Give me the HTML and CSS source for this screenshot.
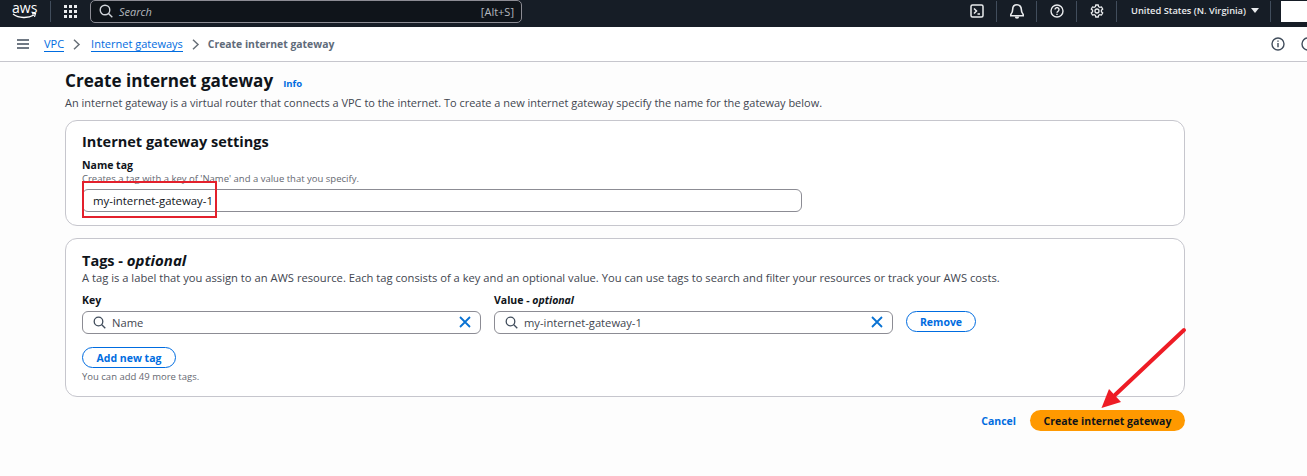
FILE: index.html
```html
<!DOCTYPE html>
<html lang="en">
<head>
    <meta charset="UTF-8">
    <title>Create internet gateway</title>
    <link rel="stylesheet" href="styles.css">
</head>
<body>
    <header class="topbar">
        <div class="logo">
            <span class="logo-text">aws</span>
            <svg class="logo-smile" width="25" height="6" viewBox="0 0 25 6"><path d="M1 1c6 4.500 15 4.500 21 1" fill="none" stroke="#fff" stroke-width="1.400"/><path d="M20 .8l3.500-.3-1 3.300" fill="none" stroke="#fff" stroke-width="1.200"/></svg>
        </div>
        <div class="grid-btn">
            <svg width="13" height="13" viewBox="0 0 13 13" fill="#e9ebed">
                <rect x="0" y="0" width="3" height="3"/><rect x="5" y="0" width="3" height="3"/><rect x="10" y="0" width="3" height="3"/>
                <rect x="0" y="5" width="3" height="3"/><rect x="5" y="5" width="3" height="3"/><rect x="10" y="5" width="3" height="3"/>
                <rect x="0" y="10" width="3" height="3"/><rect x="5" y="10" width="3" height="3"/><rect x="10" y="10" width="3" height="3"/>
            </svg>
        </div>
        <div class="search">
            <svg width="14" height="14" viewBox="0 0 14 14" fill="none" stroke="#d1d5db" stroke-width="1.400"><circle cx="6" cy="6" r="4.800"/><path d="M9.500 9.500l3.800 3.800"/></svg>
            <span class="search-text">Search</span>
            <span class="search-key">[Alt+S]</span>
        </div>
        <div class="top-icons">
            <div class="top-icon">
                <svg width="14" height="14" viewBox="0 0 14 14" fill="none" stroke="#e9ebed" stroke-width="1.500"><rect x="1" y="1" width="12" height="12" rx="1.500"/><path d="M4 4.500l2.500 2.500L4 9.500M7.500 10H10"/></svg>
            </div>
            <div class="top-icon">
                <svg width="14" height="15" viewBox="0 0 14 15" fill="#e9ebed"><path d="M7 .8c-2.700 0-4.300 2-4.300 4.500 0 2.500-.7 3.900-1.900 5.200v1.200h12.400v-1.200c-1.200-1.300-1.900-2.700-1.900-5.200C11.300 2.800 9.700.8 7 .8z" fill="none" stroke="#e9ebed" stroke-width="1.600"/><path d="M4.800 12.500a2.200 2.200 0 0 0 4.400 0z"/></svg>
            </div>
            <div class="top-icon">
                <svg width="14" height="14" viewBox="0 0 14 14" fill="none" stroke="#e9ebed" stroke-width="1.400"><circle cx="7" cy="7" r="6"/><path d="M5 5.500a2 2 0 1 1 3 1.800c-.7.400-1 .8-1 1.500"/><path d="M7 9.800v1.300"/></svg>
            </div>
            <div class="top-icon">
                <svg width="14" height="14" viewBox="0 0 14 14" fill="none" stroke="#e9ebed" stroke-width="1.300"><circle cx="7" cy="7" r="2"/><path d="M5.800 1h2.400l.4 1.700 1.200.7 1.700-.5 1.200 2.100-1.300 1.200v1.600l1.300 1.200-1.200 2.100-1.700-.5-1.200.7-.4 1.700H5.800l-.4-1.700-1.200-.7-1.700.5-1.200-2.100 1.300-1.200V6.200L1.300 5l1.200-2.100 1.700.5 1.200-.7z"/></svg>
            </div>
            <div class="region">United States (N. Virginia) <span class="caret"></span></div>
            <div class="account"><span class="account-box"></span></div>
        </div>
    </header>

    <nav class="crumbs">
        <svg class="menu-icon" width="12" height="10" viewBox="0 0 12 10" fill="none" stroke="#414d5c" stroke-width="1.600"><path d="M0 1h12M0 5h12M0 9h12"/></svg>
        <a class="crumb-link" href="#">VPC</a>
        <svg class="chev chev-first" width="8" height="11" viewBox="0 0 8 11" fill="none" stroke="#687078" stroke-width="1.500"><path d="M1 .8l5 4.700-5 4.700"/></svg>
        <a class="crumb-link" href="#">Internet gateways</a>
        <svg class="chev chev-last" width="8" height="11" viewBox="0 0 8 11" fill="none" stroke="#687078" stroke-width="1.500"><path d="M1 .8l5 4.700-5 4.700"/></svg>
        <span class="crumb-current">Create internet gateway</span>
        <div class="crumb-tools">
            <svg width="14" height="14" viewBox="0 0 14 14" fill="none" stroke="#414d5c" stroke-width="1.400"><circle cx="7" cy="7" r="6"/><path d="M7 6v4.300M7 3.400v1.400"/></svg>
            <svg width="14" height="14" viewBox="0 0 14 14" fill="none" stroke="#414d5c" stroke-width="1.400"><circle cx="7" cy="7" r="6"/><path d="M7 3.500v4l2.500 1.500"/></svg>
        </div>
    </nav>

    <main class="page">
        <div class="title-row">
            <h1>Create internet gateway</h1>
            <a class="info" href="#">Info</a>
        </div>
        <p class="intro">An internet gateway is a virtual router that connects a VPC to the internet. To create a new internet gateway specify the name for the gateway below.</p>

        <section class="card settings">
            <h2>Internet gateway settings</h2>
            <label class="label">Name tag</label>
            <p class="hint">Creates a tag with a key of 'Name' and a value that you specify.</p>
            <div class="input name-input">my-internet-gateway-1</div>
        </section>

        <section class="card tags">
            <h2>Tags - <em>optional</em></h2>
            <p class="desc">A tag is a label that you assign to an AWS resource. Each tag consists of a key and an optional value. You can use tags to search and filter your resources or track your AWS costs.</p>
            <div class="tag-row">
                <div class="tag-field">
                    <label class="label">Key</label>
                    <div class="input search-input">
                        <svg width="13" height="13" viewBox="0 0 13 13" fill="none" stroke="#414d5c" stroke-width="1.300"><circle cx="5.500" cy="5.500" r="4.300"/><path d="M8.800 8.800l3.500 3.500"/></svg>
                        <span class="input-text">Name</span>
                        <svg width="12" height="12" viewBox="0 0 12 12" fill="none" stroke="#0972d3" stroke-width="1.800"><path d="M1 1l10 10M11 1L1 11"/></svg>
                    </div>
                </div>
                <div class="tag-field">
                    <label class="label">Value - <em>optional</em></label>
                    <div class="input search-input">
                        <svg width="13" height="13" viewBox="0 0 13 13" fill="none" stroke="#414d5c" stroke-width="1.300"><circle cx="5.500" cy="5.500" r="4.300"/><path d="M8.800 8.800l3.500 3.500"/></svg>
                        <span class="input-text">my-internet-gateway-1</span>
                        <svg width="12" height="12" viewBox="0 0 12 12" fill="none" stroke="#0972d3" stroke-width="1.800"><path d="M1 1l10 10M11 1L1 11"/></svg>
                    </div>
                </div>
                <button class="btn remove-btn">Remove</button>
            </div>
            <button class="btn add-btn">Add new tag</button>
            <p class="limit">You can add 49 more tags.</p>
        </section>

        <div class="actions">
            <a class="cancel" href="#">Cancel</a>
            <button class="btn-primary">Create internet gateway</button>
        </div>
    </main>

    <!-- annotations drawn over the screenshot -->
    <div class="mark-box"></div>
    <svg class="mark-arrow" width="90" height="85" viewBox="0 0 90 85">
        <path d="M84 3L15 68" stroke="#ee1c25" stroke-width="4" stroke-linecap="round" fill="none"/>
        <path d="M1.500 81L9 62L21 75z" fill="#ee1c25"/>
    </svg>
</body>
</html>
```

FILE: styles.css
```css
*{
    box-sizing: border-box;
    margin: 0;
    padding: 0;
}

html, body{
    width: 1307px;
    height: 476px;
    overflow: hidden;
}

body{
    position: relative;
    font-family: "Open Sans", Arial, sans-serif;
    font-size: 11px;
    color: #0f141a;
    background: #fdfdfd;
}

/* top bar */
.topbar{
    display: flex;
    align-items: center;
    height: 27px;
    padding-bottom: 5px;
    background: #161d26;
    color: #e9ebed;
}

.logo{
    width: 50px;
    height: 22px;
    padding: 0 0 0 12px;
    display: flex;
    flex-direction: column;
    align-items: flex-start;
}

.logo-text{
    font-size: 14px;
    line-height: 13px;
    margin-top: 1px;
    color: #fff;
}

.logo-smile{
    margin-top: -1px;
}

.grid-btn{
    width: 40px;
    height: 21px;
    display: flex;
    align-items: center;
    padding-left: 13px;
    border-left: 1px solid #414d5c;
}

.search{
    width: 432px;
    height: 23px;
    display: flex;
    align-items: center;
    padding: 0 7px 0 8px;
    border: 1px solid #8c8c94;
    border-radius: 5px;
    background: #0f141a;
}

.search-text{
    margin-left: 6px;
    font-style: italic;
    color: #b4b8be;
}

.search-key{
    margin-left: auto;
    color: #b4b8be;
}

.top-icons{
    display: flex;
    align-items: center;
    margin-left: auto;
    height: 21px;
}

.top-icon{
    width: 40px;
    height: 21px;
    display: flex;
    align-items: center;
    justify-content: center;
    border-right: 1px solid #414d5c;
}

.region{
    width: 154px;
    height: 21px;
    line-height: 20px;
    padding-left: 14px;
    font-size: 9.300px;
    font-weight: 600;
    border-right: 1px solid #414d5c;
    white-space: nowrap;
}

.caret{
    display: inline-block;
    margin-left: 3px;
    border-left: 4px solid transparent;
    border-right: 4px solid transparent;
    border-top: 5px solid #e9ebed;
    vertical-align: 1px;
}

.account{
    width: 36px;
    padding-left: 10px;
}

.account-box{
    display: block;
    width: 26px;
    height: 21px;
    background: #fff;
}

/* breadcrumbs */
.crumbs{
    display: flex;
    align-items: center;
    height: 35px;
    padding-left: 17px;
    background: #fff;
    border-bottom: 1px solid #c6c6cd;
    font-size: 11px;
}

.menu-icon{
    margin-right: 15px;
}

.crumb-link{
    color: #006ce0;
    text-decoration: none;
    border-bottom: 1px solid #006ce0;
    line-height: 14px;
}

.chev{
    margin: 0 9px;
}

.chev-first{
    margin-right: 10px;
}

.chev-last{
    margin-right: 8px;
}

.crumb-current{
    color: #5f6b7a;
    font-weight: 700;
    font-size: 10.400px;
}

.crumb-tools{
    display: flex;
    gap: 16px;
    margin-left: auto;
    margin-right: -8px;
}

/* page */
.page{
    width: 1120px;
    margin-left: 65px;
}

.title-row{
    display: flex;
    align-items: baseline;
    margin-top: 7px;
    height: 26px;
}

h1{
    font-size: 17.100px;
    line-height: 24px;
    font-weight: 700;
}

.info{
    margin-left: 10px;
    font-size: 9.500px;
    font-weight: 700;
    color: #006ce0;
    text-decoration: none;
}

.intro{
    line-height: 15px;
    font-size: 10.970px;
    color: #424650;
}

.card{
    background: #fff;
    border: 1px solid #c6c6cd;
    border-radius: 12px;
    padding: 0 16px;
}

h2{
    font-size: 14.500px;
    font-weight: 700;
}

h2 em{
    font-style: italic;
    font-size: 15px;
}

.settings{
    height: 106px;
    margin-top: 10px;
    padding-top: 10px;
}

.settings h2{
    line-height: 22px;
}

.label{
    display: block;
    font-size: 10.500px;
    font-weight: 700;
    line-height: 15px;
}

.settings .label{
    margin-top: 5px;
}

.hint{
    font-size: 9.500px;
    line-height: 11px;
    color: #656871;
}

.input{
    height: 23px;
    border: 1px solid #8c8c94;
    border-radius: 6px;
    background: #fff;
}

.name-input{
    width: 720px;
    margin-top: 5px;
    padding-left: 10px;
    line-height: 21px;
    font-size: 11.400px;
    color: #0f141a;
}

.tags{
    height: 159px;
    margin-top: 12px;
    padding-top: 11px;
}

.tags h2{
    line-height: 20px;
}

.desc{
    margin-top: -1px;
    line-height: 15px;
    font-size: 11.200px;
    color: #424650;
}

.tag-row{
    display: flex;
    align-items: flex-end;
    gap: 13px;
    margin-top: 8px;
}

.tag-field{
    width: 399px;
}

.tag-field .label{
    margin-bottom: 3px;
}

.search-input{
    display: flex;
    align-items: center;
    padding: 0 9px 1px 10px;
}

.input-text{
    flex: 1;
    margin-left: 6px;
    font-size: 11.200px;
    color: #424650;
}

.btn{
    height: 21px;
    border: 1px solid #006ce0;
    border-radius: 11px;
    background: #fff;
    color: #006ce0;
    font-family: inherit;
    font-size: 10.500px;
    font-weight: 700;
}

.remove-btn{
    width: 70px;
    margin-bottom: 2px;
}

.add-btn{
    display: block;
    width: 94px;
    margin-top: 13px;
}

.limit{
    margin-top: 2px;
    font-size: 9.500px;
    line-height: 13px;
    color: #656871;
}

.actions{
    display: flex;
    align-items: center;
    justify-content: flex-end;
    margin-top: 13px;
}

.cancel{
    margin-right: 14px;
    font-size: 10.500px;
    font-weight: 700;
    color: #006ce0;
    text-decoration: none;
}

.btn-primary{
    width: 155px;
    height: 21px;
    border: none;
    border-radius: 11px;
    background: #ff9900;
    color: #0f141a;
    font-family: inherit;
    font-size: 10.500px;
    font-weight: 700;
}

/* annotations */
.mark-box{
    position: absolute;
    left: 82px;
    top: 181px;
    width: 135px;
    height: 37px;
    border: 2px solid #e3202c;
}

.mark-arrow{
    position: absolute;
    left: 1100px;
    top: 327px;
}
```
